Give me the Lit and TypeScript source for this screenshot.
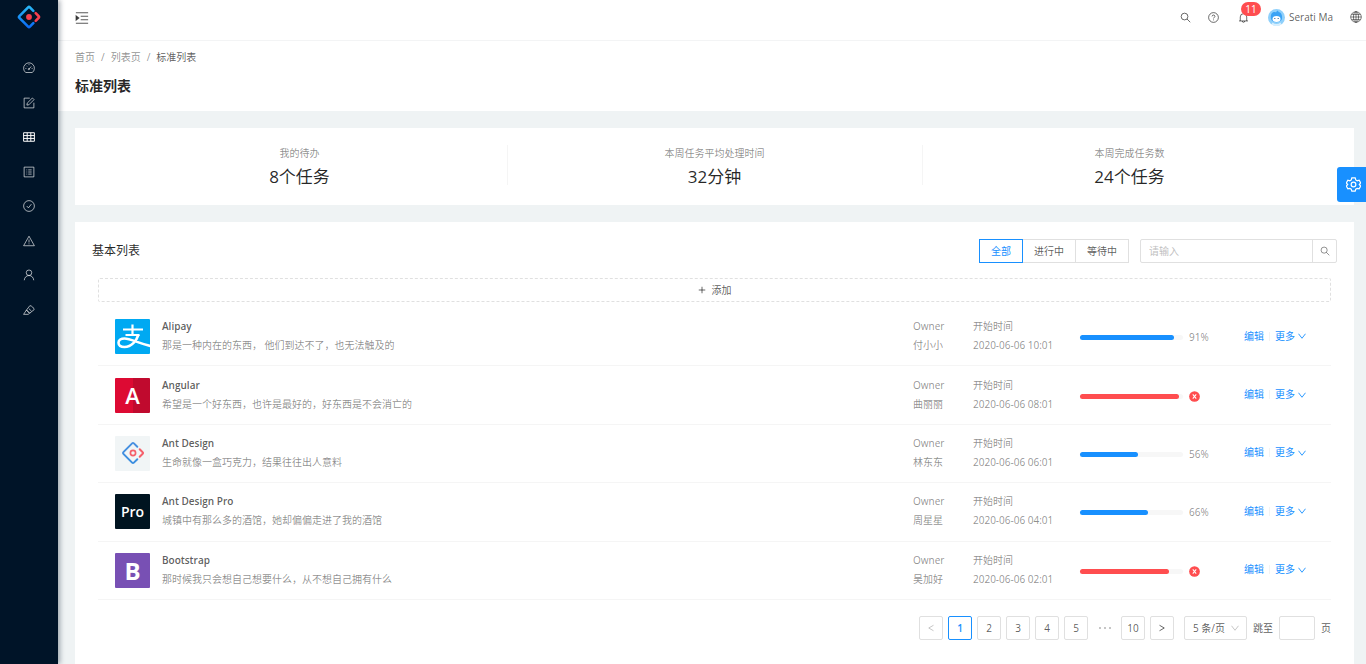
import { LitElement, html, css, svg } from "lit";
import { customElement, state } from "lit/decorators.js";
import { classMap } from "lit/directives/class-map.js";

const glyphs = {
  dashboard: svg`<path d="M3.600 14A7.200 7.200 0 1 1 12.400 14Z"/><path d="M8 9.400 10.900 6M8 2.900v1.300M3.200 8.600h1.300M11.500 8.600h1.300M4.500 5l.9.9"/><circle cx="7.800" cy="9.500" r=".8"/>`,
  form: svg`<path d="M9 1.500H1.500v13h13V7.600"/><path d="M5.200 10.800l.4-2.600 6.900-6.900 2.200 2.200-6.900 6.900z"/>`,
  table: svg`<path d="M.8 2.300h14.400v11.400H.8zM.8 6.100h14.400M.8 9.900h14.400M5.600 2.300v11.400M10.400 2.300v11.400"/>`,
  profile: svg`<path d="M1.500 1.500h13v13h-13z"/><path d="M7 5.200h4.500M7 8h4.500M7 10.800h4.500M4.600 5.200h1M4.600 8h1M4.600 10.800h1"/>`,
  check: svg`<circle cx="8" cy="8" r="7.200"/><path d="M5 8l2.200 2.500 4-5"/>`,
  warning: svg`<path d="M8 1.600 15.200 14.300H.8z"/><path d="M8 6v4M8 11.200v1.200"/>`,
  user: svg`<circle cx="8" cy="5" r="3.700"/><path d="M1.700 15c.3-3.700 2.800-6.300 6.300-6.300s6 2.600 6.300 6.300"/>`,
  highlight: svg`<path d="M.8 13.800 4.600 8l4.200 4.300-1.900 1.500z"/><path d="M4.600 8 9.200 2.200c2.600.3 5 2.600 5.700 5.300L8.800 12.300zM7.800 6.200l3.500 3.300"/>`,
  fold: svg`<path d="M1 2h14M6.500 6h8.500M6.500 10h8.500M1 14h14"/><path d="M1.300 5.600 4.300 8l-3 2.400z" fill="currentColor"/>`,
  search: svg`<circle cx="6.600" cy="6.600" r="4.900"/><path d="M10.200 10.200l4.700 4.700"/>`,
  question: svg`<circle cx="8" cy="8" r="7.100"/><path d="M5.900 6.400C5.900 3.800 10.100 3.800 10.100 6.400 10.100 7.900 8 7.800 8 9.400M8 10.900v1.200"/>`,
  bell: svg`<path d="M1.500 13h13M3.300 13V7.200a4.700 4.700 0 0 1 9.400 0V13M8 2.500V1M6.200 13.200a1.800 1.800 0 0 0 3.600 0"/>`,
  globe: svg`<circle cx="8" cy="8" r="7.100"/><ellipse cx="8" cy="8" rx="3.400" ry="7.100"/><path d="M8 .9v14.200M.9 8h14.200M2.100 4.500h11.800M2.100 11.500h11.800"/>`,
  plus: svg`<path d="M8 1.500v13M1.500 8h13"/>`,
  down: svg`<path d="M1 3.500 8 12.500l7-9"/>`,
  left: svg`<path d="M13 2.500 3.500 8l9.500 5.500"/>`,
  right: svg`<path d="M3 2.500 12.500 8 3 13.500"/>`,
  gear: svg`<path d="M6.200 1h3.600l.6 2.100 1.500.9 2.100-.6 1.700 3-1.500 1.600 1.500 1.700-1.700 3-2.100-.6-1.500.8L9.800 15H6.200l-.6-2.100-1.500-.8-2.100.6-1.700-3L1.800 8 .3 6.400l1.700-3 2.100.6 1.500-.9z"/><circle cx="8" cy="8" r="2.500"/>`,
};

type Glyph = keyof typeof glyphs;
const icon = (name: Glyph, size = "") =>
  html`<svg class="icon ${size}" viewBox="0 0 16 16" aria-hidden="true">${glyphs[name]}</svg>`;

const antMark = (id: string, hollow = false) => html`<svg class="mark" viewBox="0 0 24 24" aria-hidden="true">
  <defs>
    <linearGradient id=${id} x1="0" y1="0" x2="0" y2="1">
      <stop offset="0" stop-color=${hollow ? "#4a90e0" : "#29b6f6"} /><stop offset="1" stop-color=${hollow ? "#3d8fe0" : "#0a6cf5"} />
    </linearGradient>
  </defs>
  <path d="M16.300 5.800 12.900 2.400a1.300 1.300 0 0 0-1.800 0L2.400 11.100a1.300 1.300 0 0 0 0 1.800l8.700 8.700a1.300 1.300 0 0 0 1.800 0l3.400-3.400" fill="none" stroke="url(#${id})" stroke-width=${hollow ? 2 : 2.6} stroke-linecap="round" />
  <path d="M18.700 8.200 21.700 11.200a1.100 1.100 0 0 1 0 1.600L18.700 15.800" fill="none" stroke=${hollow ? "#f5606b" : "#f5404f"} stroke-width=${hollow ? 2 : 2.6} stroke-linecap="round" />
  <circle cx="12" cy="12" r=${hollow ? 2.6 : 2.9} fill=${hollow ? "none" : "#f5404f"} stroke=${hollow ? "#f5606b" : "none"} stroke-width="1.700" />
</svg>`;

const alipayMark = html`<svg class="full" viewBox="0 0 35 35" aria-hidden="true">
  <g fill="none" stroke="#fff">
    <path d="M8 10.500h20M17.500 5.500v11M10.500 16H24.500" stroke-width="2.200" />
    <path d="M23.500 15.500C21.500 22 16.500 28 9.500 28c-4 0-6-1.600-6-4.200 0-2.700 2.600-4.300 6-4.300 6 0 13 4.500 26 7.500" stroke-width="2.600" />
  </g>
</svg>`;

interface Item {
  title: string;
  kind: string;
  text: string;
  owner: string;
  time: string;
  percent: number;
  failed?: boolean;
}

const items: Item[] = [
  { title: "Alipay", kind: "alipay", text: "那是一种内在的东西， 他们到达不了，也无法触及的", owner: "付小小", time: "2020-06-06 10:01", percent: 91 },
  { title: "Angular", kind: "angular", text: "希望是一个好东西，也许是最好的，好东西是不会消亡的", owner: "曲丽丽", time: "2020-06-06 08:01", percent: 96, failed: true },
  { title: "Ant Design", kind: "antd", text: "生命就像一盒巧克力，结果往往出人意料", owner: "林东东", time: "2020-06-06 06:01", percent: 56 },
  { title: "Ant Design Pro", kind: "pro", text: "城镇中有那么多的酒馆，她却偏偏走进了我的酒馆", owner: "周星星", time: "2020-06-06 04:01", percent: 66 },
  { title: "Bootstrap", kind: "bootstrap", text: "那时候我只会想自己想要什么，从不想自己拥有什么", owner: "吴加好", time: "2020-06-06 02:01", percent: 86, failed: true },
];

const logos: Record<string, unknown> = {
  alipay: alipayMark,
  angular: "A",
  antd: antMark("antd-item", true),
  pro: "Pro",
  bootstrap: "B",
};

const menu: [Glyph, string][] = [
  ["dashboard", "Dashboard"],
  ["form", "表单页"],
  ["table", "列表页"],
  ["profile", "详情页"],
  ["check", "结果页"],
  ["warning", "异常页"],
  ["user", "个人页"],
  ["highlight", "图形编辑器"],
];

const base = css`
  * { box-sizing: border-box; }
  a { color: inherit; text-decoration: none; }
  button, input, select { font: inherit; color: inherit; margin: 0; padding: 0; outline: none; }
  button { background: none; border: 0; cursor: pointer; }
  .icon { width: 12px; height: 12px; display: block; fill: none; stroke: currentColor; stroke-width: 1.3; flex: none; }
  .icon.small { width: 8px; height: 8px; stroke-width: 1.800; }
  .icon.medium { width: 10px; height: 10px; stroke-width: 1.500; }
  .icon.large { width: 15px; height: 15px; }
  .mark { display: block; width: 24px; height: 24px; }
`;

@customElement("side-menu")
class SideMenu extends LitElement {
  static styles = [base, css`
    :host { display: block; flex: none; width: 58px; background: #001428; box-shadow: 2px 0 5px rgba(0, 21, 41, 0.35); z-index: 2; }
    .logo { display: flex; justify-content: center; height: 51px; padding-top: 5px; }
    .list { display: grid; grid-auto-rows: 1fr; min-height: 276px; }
    .entry { display: flex; align-items: center; justify-content: center; color: rgba(255, 255, 255, 0.65); }
    .entry.active { color: #fff; }
  `];

  render() {
    return html`
      <a class="logo" href="#" aria-label="Ant Design Pro">${antMark("brand")}</a>
      <nav class="list">
        ${menu.map(([name, label]) => html`<a class=${classMap({ entry: true, active: name === "table" })} href="#" aria-label=${label}>${icon(name)}</a>`)}
      </nav>`;
  }
}

@customElement("top-bar")
class TopBar extends LitElement {
  static styles = [base, css`
    :host { display: flex; justify-content: space-between; align-items: flex-start; height: 41px; padding: 8px 4px 0 17px; background: #fff; border-bottom: 1px solid #f3f4f5; color: rgba(0, 0, 0, 0.65); }
    .fold { height: 20px; }
    .fold .icon { width: 14px; height: 14px; }
    .tools { display: flex; align-items: center; height: 18px; gap: 17px; }
    .tool { display: block; }
    .icon { width: 11px; height: 11px; }
    .notice { position: relative; margin: 0 2px; }
    .badge { position: absolute; left: 3px; top: -10px; width: 20px; height: 14px; border-radius: 7px; background: #ff4d4f; color: #fff; line-height: 14px; text-align: center; }
    .account { display: flex; align-items: center; gap: 4px; }
    .face { display: block; width: 17px; height: 17px; }
    .language .icon { width: 12px; height: 12px; stroke-width: 1; }
  `];

  render() {
    return html`
      <button class="fold" aria-label="展开菜单">${icon("fold")}</button>
      <div class="tools">
        <button class="tool" aria-label="搜索">${icon("search")}</button>
        <a class="tool" href="#" aria-label="帮助">${icon("question")}</a>
        <button class="tool notice" aria-label="通知">${icon("bell")}<span class="badge">11</span></button>
        <a class="account" href="#">
          <svg class="face" viewBox="0 0 34 34" aria-hidden="true">
            <circle cx="17" cy="17" r="17" fill="#8fd0fb" />
            <path d="M6 20C4 9 10 4 16 7c2-5 5-4 5-1 6 1 8 7 7 14-2 8-19 9-22 0z" fill="#3aa3f5" />
            <ellipse cx="17" cy="20" rx="8" ry="6" fill="#fff" />
            <path d="M12 19h3M19 19h3" stroke="#3a6fa0" stroke-width="1.500" />
            <path d="M9 27q8 6 16 0l2 4q-10 6-20 0z" fill="#d8effd" />
          </svg>
          <span>Serati Ma</span>
        </a>
        <button class="tool language" aria-label="语言">${icon("globe")}</button>
      </div>`;
  }
}

@customElement("task-row")
class TaskRow extends LitElement {
  static properties = { item: { attribute: false } };
  declare item: Item;

  static styles = [base, css`
    :host { display: flex; align-items: center; padding: 0 25px 0 17px; border-bottom: 1px solid #f5f5f5; color: rgba(0, 0, 0, 0.45); line-height: 19px; }
    .logo { display: flex; align-items: center; justify-content: center; flex: none; width: 35px; height: 35px; margin-right: 12px; border-radius: 1px; color: #fff; font-weight: 600; overflow: hidden; }
    .alipay { background: #00a9f2; }
    .angular { background: linear-gradient(90deg, #dd0a33 50%, #c00a2e 50%); font-size: 22px; }
    .antd { background: #f1f5f6; }
    .pro { background: #001420; font-size: 14px; }
    .bootstrap { background: #7850b4; font-size: 24px; font-weight: 700; }
    .full { display: block; width: 35px; height: 35px; }
    .meta { flex: 1; min-width: 0; padding-bottom: 1px; }
    .title { display: block; font-weight: 600; color: rgba(0, 0, 0, 0.65); }
    .cell { padding-bottom: 1px; }
    .owner { width: 60px; }
    .time { width: 107px; }
    .cell span { display: block; }
    .progress { display: flex; align-items: center; gap: 6px; width: 164px; padding-top: 2px; }
    .track { width: 103px; height: 5px; border-radius: 3px; background: #f7f7f7; }
    .fill { height: 5px; border-radius: 3px; background: #1890ff; }
    .fill.failed { background: #ff4d4f; }
    .error { width: 11px; height: 11px; display: block; }
    .actions { display: flex; align-items: center; gap: 5px; padding-bottom: 1px; color: #1890ff; }
    .more { display: flex; align-items: center; gap: 3px; }
    .rule { width: 1px; height: 9px; background: #f3f3f3; }
  `];

  render() {
    const { title, kind, text, owner, time, percent, failed } = this.item;
    return html`
      <span class="logo ${kind}">${logos[kind]}</span>
      <div class="meta"><a class="title" href="#">${title}</a><span>${text}</span></div>
      <div class="cell owner"><span>Owner</span><span>${owner}</span></div>
      <div class="cell time"><span>开始时间</span><span>${time}</span></div>
      <div class="progress">
        <div class="track" role="progressbar" aria-label=${title} aria-valuenow=${percent} aria-valuemin="0" aria-valuemax="100">
          <div class=${classMap({ fill: true, failed: !!failed })} style="width:${percent}%"></div>
        </div>
        ${failed
          ? html`<svg class="error" viewBox="0 0 16 16" aria-hidden="true"><circle cx="8" cy="8" r="7.800" fill="#ff4d4f" /><path d="M5.500 5 10.500 11M10.500 5 5.500 11" stroke="#fff" stroke-width="1.500" /></svg>`
          : html`<span>${percent}%</span>`}
      </div>
      <div class="actions"><a href="#">编辑</a><span class="rule"></span><a class="more" href="#">更多${icon("down", "small")}</a></div>`;
  }
}

@customElement("page-nav")
class PageNav extends LitElement {
  static properties = { current: { type: Number } };
  declare current: number;

  constructor() {
    super();
    this.current = 1;
  }

  static styles = [base, css`
    :host { display: flex; justify-content: flex-end; align-items: center; gap: 5px; line-height: 22px; color: rgba(0, 0, 0, 0.65); }
    .page { display: flex; align-items: center; justify-content: center; width: 24px; height: 24px; border: 1px solid #e0e0e0; border-radius: 2px; background: #fff; }
    .page.active { border-color: #1890ff; color: #1890ff; font-weight: 600; }
    .page:disabled { color: rgba(0, 0, 0, 0.25); }
    .dots { display: flex; align-items: center; justify-content: center; gap: 3px; width: 23px; }
    .dot { width: 2px; height: 2px; border-radius: 1px; background: rgba(0, 0, 0, 0.3); }
    .size { display: flex; align-items: center; position: relative; margin-left: 5px; }
    .select { appearance: none; width: 63px; height: 24px; padding-left: 8px; border: 1px solid #e0e0e0; border-radius: 2px; background: #fff; }
    .size .icon { position: absolute; right: 8px; color: rgba(0, 0, 0, 0.25); pointer-events: none; }
    .jump { display: flex; align-items: center; gap: 6px; margin-left: 1px; }
    .field { width: 36px; height: 24px; padding: 0 6px; border: 1px solid #e0e0e0; border-radius: 2px; }
  `];

  private page(n: number) {
    return html`<button class=${classMap({ page: true, active: n === this.current })} @click=${() => (this.current = n)}>${n}</button>`;
  }

  render() {
    return html`
      <button class="page" aria-label="上一页" ?disabled=${this.current === 1} @click=${() => this.current--}>${icon("left", "small")}</button>
      ${[1, 2, 3, 4, 5].map((n) => this.page(n))}
      <span class="dots"><i class="dot"></i><i class="dot"></i><i class="dot"></i></span>
      ${this.page(10)}
      <button class="page" aria-label="下一页" ?disabled=${this.current === 10} @click=${() => this.current++}>${icon("right", "small")}</button>
      <div class="size"><select class="select" aria-label="每页条数"><option>5 条/页</option><option>10 条/页</option><option>20 条/页</option></select>${icon("down", "small")}</div>
      <label class="jump">跳至<input class="field" type="text" />页</label>`;
  }
}

@customElement("app-root")
class AppRoot extends LitElement {
  @state() private filter = "全部";

  static styles = [base, css`
    :host { display: flex; height: 100vh; overflow: hidden; background: #eff3f4; color: rgba(0, 0, 0, 0.65); font-family: "Open Sans", "Noto Sans CJK SC", sans-serif; font-size: 10px; line-height: 16px; }
    .body { display: flex; flex-direction: column; flex: 1; min-width: 0; }
    .heading { padding: 8px 17px 14px; background: #fff; }
    .crumbs { display: flex; gap: 6px; color: rgba(0, 0, 0, 0.45); }
    .here { color: rgba(0, 0, 0, 0.65); }
    .name { margin: 10px 0 0; font-size: 14px; line-height: 22px; font-weight: 600; color: rgba(0, 0, 0, 0.85); }
    .content { display: flex; flex-direction: column; flex: 1; gap: 17px; padding: 17px 12px 0 17px; }
    .card { background: #fff; padding: 17px 17px 16px; }
    .stats { display: grid; grid-template-columns: repeat(3, 1fr); text-align: center; color: rgba(0, 0, 0, 0.45); }
    .stat + .stat { background: linear-gradient(#f5f5f5, #f5f5f5) left top / 1px 40px no-repeat; }
    .value { display: block; font-size: 17px; line-height: 25px; margin-top: 3px; color: rgba(0, 0, 0, 0.85); }
    .board { flex: 1; }
    .bar { display: flex; align-items: center; gap: 11px; height: 24px; }
    .label { flex: 1; margin: 0; font-size: 12px; font-weight: 400; color: rgba(0, 0, 0, 0.85); }
    .tabs { display: flex; }
    .tab { height: 24px; padding: 0 11px; border: 1px solid #e0e0e0; }
    .tab + .tab { margin-left: -1px; }
    .tab.active { border-color: #1890ff; color: #1890ff; z-index: 1; }
    .find { display: flex; width: 197px; height: 24px; border: 1px solid #e0e0e0; border-radius: 2px; }
    .query { flex: 1; min-width: 0; padding: 0 8px; border: 0; background: none; }
    .query::placeholder { color: #bfbfbf; }
    .go { display: flex; align-items: center; justify-content: center; width: 24px; border-left: 1px solid #e0e0e0; color: rgba(0, 0, 0, 0.45); }
    .inner { padding: 15px 6px 0; }
    .add { display: flex; align-items: center; justify-content: center; gap: 6px; width: 100%; height: 24px; border: 1px dashed #e0e0e0; border-radius: 2px; }
    .rows { display: grid; grid-auto-rows: 1fr; min-height: 292px; margin: 6px 0 16px; }
    .settings { position: fixed; right: 0; top: 167px; display: flex; align-items: center; width: 29px; height: 35px; padding-left: 9px; border-radius: 3px 0 0 3px; background: #1890ff; color: #fff; }
  `];

  render() {
    const stats = [["我的待办", "8个任务"], ["本周任务平均处理时间", "32分钟"], ["本周完成任务数", "24个任务"]];
    return html`
      <side-menu></side-menu>
      <div class="body">
        <top-bar></top-bar>
        <header class="heading">
          <nav class="crumbs" aria-label="breadcrumb"><a href="#">首页</a><span>/</span><a href="#">列表页</a><span>/</span><span class="here">标准列表</span></nav>
          <h1 class="name">标准列表</h1>
        </header>
        <main class="content">
          <section class="card stats">
            ${stats.map(([label, value]) => html`<div class="stat"><span>${label}</span><span class="value">${value}</span></div>`)}
          </section>
          <section class="card board">
            <div class="bar">
              <h2 class="label">基本列表</h2>
              <div class="tabs">
                ${["全部", "进行中", "等待中"].map((t) => html`<button class=${classMap({ tab: true, active: t === this.filter })} aria-pressed=${t === this.filter} @click=${() => (this.filter = t)}>${t}</button>`)}
              </div>
              <div class="find"><input class="query" type="search" aria-label="搜索" placeholder="请输入" /><button class="go" aria-label="搜索">${icon("search", "medium")}</button></div>
            </div>
            <div class="inner">
              <button class="add">${icon("plus", "small")}添加</button>
              <div class="rows">${items.map((item) => html`<task-row .item=${item}></task-row>`)}</div>
              <page-nav></page-nav>
            </div>
          </section>
        </main>
      </div>
      <button class="settings" aria-label="设置">${icon("gear", "large")}</button>`;
  }
}
